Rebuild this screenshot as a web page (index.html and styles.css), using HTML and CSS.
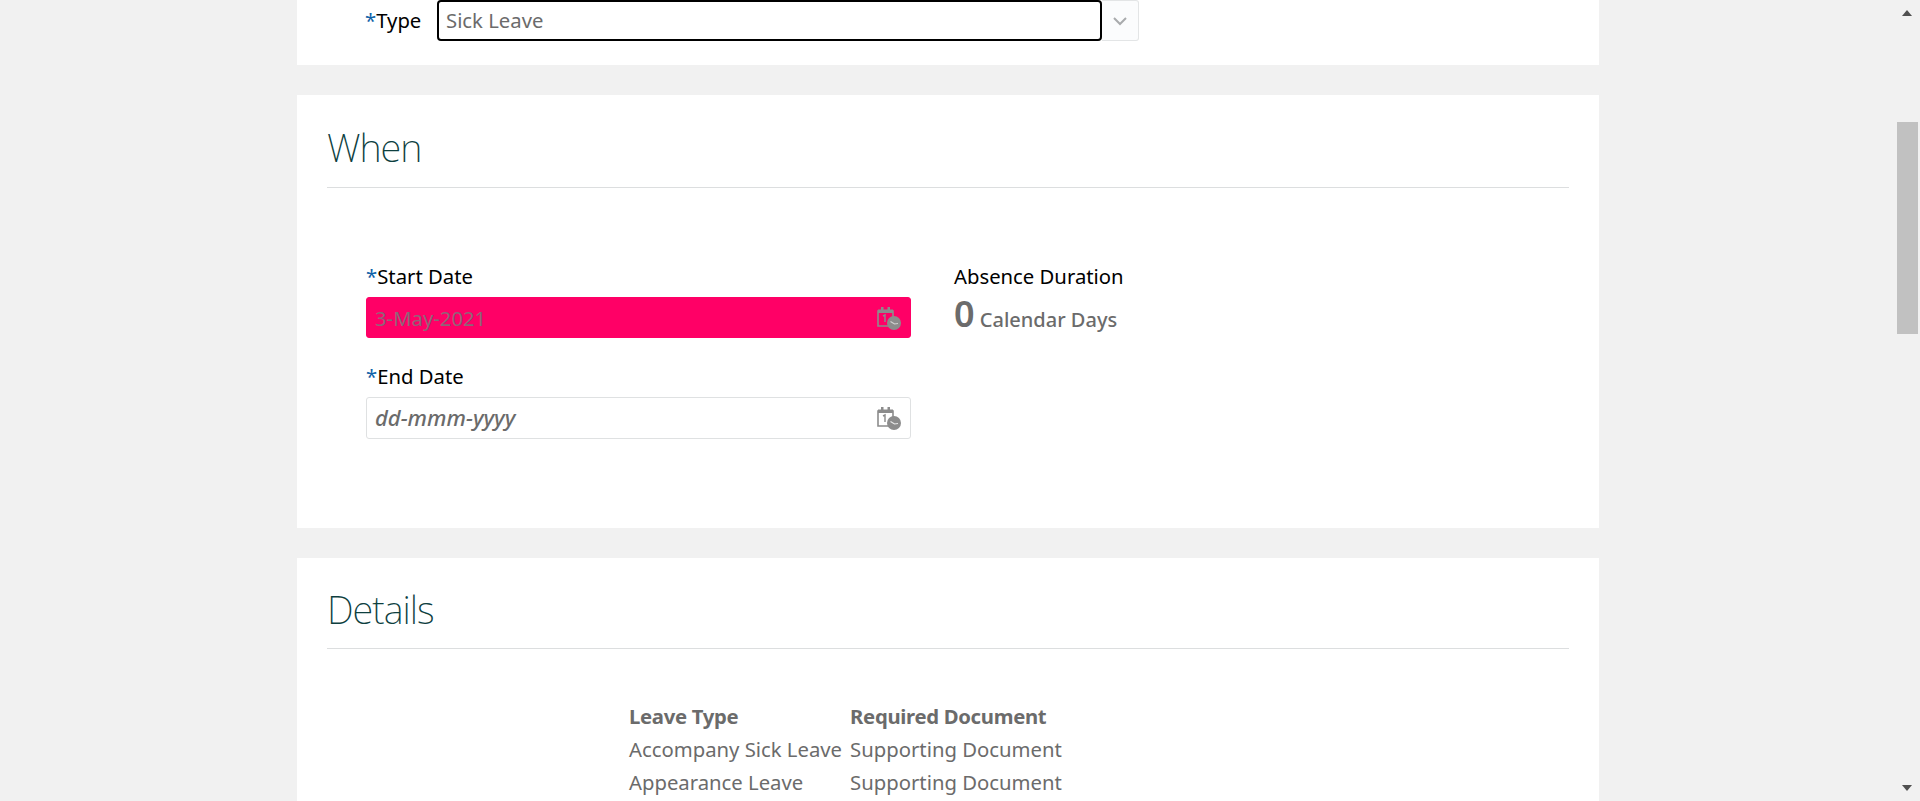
FILE: index.html
```html
<!DOCTYPE html>
<html>
<head>
    <meta charset="UTF-8">
    <title>Add Absence</title>
    <link rel="stylesheet" href="styles.css">
</head>
<body>
    <div class="page">
        <main class="content">
            <section class="card card-type">
                <div class="type-row">
                    <label class="field-label" for="absenceType"><span class="req">*</span>Type</label>
                    <input class="type-input" id="absenceType" type="text" value="Sick Leave">
                    <span class="type-arrow">
                        <svg width="16" height="10" viewBox="0 0 16 10"><path d="M2 2l6 6 6-6" fill="none" stroke="#a9abad" stroke-width="2"/></svg>
                    </span>
                </div>
            </section>

            <section class="card card-when">
                <h2>When</h2>
                <div class="when-grid">
                    <div class="when-dates">
                        <label class="field-label" for="startDate"><span class="req">*</span>Start Date</label>
                        <div class="date-field date-error">
                            <input id="startDate" type="text" value="3-May-2021">
                            <svg class="date-icon" width="26" height="24" viewBox="0 0 26 24">
                                <path d="M2 5h15v15H2z" fill="none" stroke="#8c8c8c" stroke-width="1.6"/>
                                <path d="M2 3.500h15V7H2zM5 1h2.500v3H5zM11.500 1H14v3h-2.500z" fill="#8c8c8c"/>
                                <path d="M7 10l2-1v7" fill="none" stroke="#8c8c8c" stroke-width="1.400"/>
                                <circle cx="18" cy="17" r="7" fill="#8c8c8c"/>
                                <path d="M14.500 15.500l4 2.500 3.500-.5" fill="none" stroke="#fff" stroke-width="1.200" opacity=".6"/>
                            </svg>
                        </div>
                        <label class="field-label label-end" for="endDate"><span class="req">*</span>End Date</label>
                        <div class="date-field">
                            <input id="endDate" type="text" placeholder="dd-mmm-yyyy">
                            <svg class="date-icon" width="26" height="24" viewBox="0 0 26 24">
                                <path d="M2 5h15v15H2z" fill="none" stroke="#8c8c8c" stroke-width="1.600"/>
                                <path d="M2 3.500h15V7H2zM5 1h2.500v3H5zM11.500 1H14v3h-2.500z" fill="#8c8c8c"/>
                                <path d="M7 10l2-1v7" fill="none" stroke="#8c8c8c" stroke-width="1.400"/>
                                <circle cx="18" cy="17" r="7" fill="#8c8c8c"/>
                                <path d="M14.500 15.500l4 2.500 3.500-.5" fill="none" stroke="#fff" stroke-width="1.200" opacity=".8"/>
                            </svg>
                        </div>
                    </div>
                    <div class="duration">
                        <div class="duration-label">Absence Duration</div>
                        <div class="duration-value"><b>0</b> Calendar Days</div>
                    </div>
                </div>
            </section>

            <section class="card card-details">
                <h2>Details</h2>
                <table class="doc-table">
                    <thead>
                        <tr>
                            <th>Leave Type</th>
                            <th>Required Document</th>
                        </tr>
                    </thead>
                    <tbody>
                        <tr>
                            <td>Accompany Sick Leave</td>
                            <td>Supporting Document</td>
                        </tr>
                        <tr>
                            <td>Appearance Leave</td>
                            <td>Supporting Document</td>
                        </tr>
                    </tbody>
                </table>
            </section>
        </main>
        <div class="scrollbar">
            <span class="arrow-up"></span>
            <span class="thumb"></span>
            <span class="arrow-down"></span>
        </div>
    </div>
</body>
</html>
```

FILE: styles.css
```css
html, body {
    height: 100%;
    margin: 0;
}
body {
    background-color: #f1f1f1;
    font-family: "Noto Sans", sans-serif;
    font-size: 20.3px;
    color: #6b6b6b;
    overflow: hidden;
}
.page {
    display: flex;
    height: 801px;
    overflow: hidden;
}
.content {
    flex: 1;
    display: flex;
    flex-direction: column;
    align-items: center;
    gap: 30px;
}
.card {
    flex: none;
    width: 1302px;
    box-sizing: border-box;
    background-color: #fff;
    padding: 0 30px;
}
.card-type {
    height: 65px;
}
.card-when {
    height: 433px;
}
.card-details {
    height: 400px;
}
h2 {
    margin: 0;
    height: 92px;
    line-height: 104px;
    font-size: 38px;
    font-weight: 200;
    letter-spacing: -1px;
    color: #0e3f3f;
    border-bottom: 1px solid #dcdedf;
}
.card-details h2 {
    height: 90px;
    line-height: 102px;
}
.field-label {
    display: block;
    color: #000;
    line-height: 24px;
}
.req {
    color: #0f62a8;
}
.type-row {
    display: flex;
    align-items: center;
    padding-left: 38px;
}
.type-row .field-label {
    width: 72px;
    padding-bottom: 2px;
}
.type-input {
    width: 665px;
    height: 41px;
    box-sizing: border-box;
    border: 2px solid #000;
    border-radius: 4px;
    padding: 0 7px 2px;
    font: inherit;
    color: #6b6b6b;
    background-color: #fff;
}
.type-arrow {
    width: 37px;
    height: 41px;
    box-sizing: border-box;
    display: flex;
    align-items: center;
    justify-content: center;
    background-color: #fbfcfd;
    border: 1px solid #e3e5e6;
    border-left: none;
    border-radius: 0 3px 3px 0;
}
.when-grid {
    display: flex;
    gap: 43px;
    padding: 76px 0 0 39px;
}
.when-dates {
    width: 545px;
}
.date-field {
    display: flex;
    align-items: center;
    height: 42px;
    box-sizing: border-box;
    margin-top: 9px;
    border: 1px solid #dfe1e2;
    border-radius: 3px;
    background-color: #fff;
}
.date-field input {
    flex: 1;
    min-width: 0;
    border: none;
    outline: none;
    padding: 0 8px;
    font: inherit;
    color: #6b6b6b;
    background: transparent;
}
.date-field input::placeholder {
    color: #6b6b6b;
    font-size: 22px;
    font-style: italic;
    font-weight: 500;
    opacity: 1;
}
.date-error {
    height: 41px;
    background-color: #ff0066;
    border-color: #ff0066;
}
.date-error input {
    color: #8f6478;
}
.date-icon {
    margin-right: 8px;
}
.label-end {
    margin-top: 26px;
}
.duration-label {
    color: #000;
    line-height: 24px;
}
.duration-value {
    margin-top: 5px;
    font-size: 20px;
    font-weight: 500;
    line-height: 42px;
}
.duration-value b {
    font-size: 36px;
    font-weight: 600;
}
.doc-table {
    margin: 50px 0 0 302px;
    border-collapse: collapse;
}
.doc-table th, .doc-table td {
    padding: 0 8px 0 0;
    height: 33px;
    text-align: left;
    white-space: nowrap;
}
.doc-table th {
    font-weight: 700;
    letter-spacing: -0.3px;
}
.scrollbar {
    flex: none;
    width: 24px;
    display: flex;
    flex-direction: column;
    align-items: flex-start;
}
.thumb {
    width: 21px;
    height: 212px;
    margin: 106px 0 0 1px;
    background-color: #c1c1c1;
}
.arrow-up, .arrow-down {
    width: 0;
    height: 0;
    margin-left: 6px;
    border-left: 5.500px solid transparent;
    border-right: 5.500px solid transparent;
}
.arrow-up {
    margin-top: 10px;
    border-bottom: 6px solid #505050;
}
.arrow-down {
    margin-top: 451px;
    border-top: 6px solid #505050;
}
```
